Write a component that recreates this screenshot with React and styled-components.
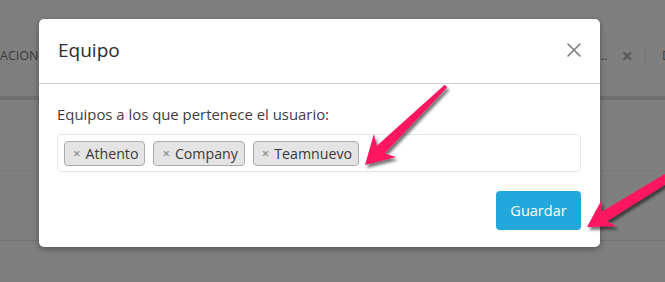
import React from "react";
import styled, { createGlobalStyle } from "styled-components";

const Global = createGlobalStyle`
  html, body { margin: 0; padding: 0; }
  body {
    width: 665px; height: 282px; overflow: hidden;
    font-family: "Open Sans", "Liberation Sans", sans-serif;
    background: #ffffff;
  }
`;

const Page = styled.div`
  position: relative;
  width: 665px;
  height: 282px;
  background: #ffffff;
  overflow: hidden;
`;

const TabBar = styled.div`
  display: flex;
  margin-top: 45px;
  height: 51px;
  border-bottom: 4px solid #dedede;
`;

const Tab = styled.div`
  display: flex;
  align-items: center;
  align-self: flex-start;
  height: 22px;
  justify-content: ${(p) => (p.$end ? "flex-end" : "flex-start")};
  gap: 14px;
  width: ${(p) => p.$w}px;
  flex: ${(p) => (p.$grow ? 1 : "none")};
  padding: ${(p) => p.$pad || "0"};
  border-right: ${(p) => (p.$divider ? "1px solid #ececec" : "none")};
  box-sizing: content-box;
  font-size: 12.5px;
  line-height: 16px;
  color: #777;
  white-space: nowrap;
`;

const TabClose = styled.span`
  font-size: 20px;
  font-weight: 700;
  color: #b4b4b4;
  line-height: 1;
`;

const Rule = styled.div`
  height: 1px;
  background: ${(p) => p.$color};
  margin-top: ${(p) => p.$mt}px;
`;

const Backdrop = styled.div`
  position: absolute;
  inset: 0;
  background: rgba(0, 0, 0, 0.5);
  display: flex;
  align-items: flex-start;
  padding: 19px 0 0 39px;
  box-sizing: border-box;
`;

const Modal = styled.div`
  width: 561px;
  background: #ffffff;
  border-radius: 5px;
  box-shadow: 0 2px 6px rgba(0, 0, 0, 0.35);
  display: flex;
  flex-direction: column;
`;

const Header = styled.div`
  height: 65px;
  display: flex;
  align-items: center;
  justify-content: space-between;
  padding: 0 18px 0 19px;
  border-bottom: 1px solid #c9cdd5;
  box-sizing: border-box;
`;

const Title = styled.h4`
  margin: 0;
  font-size: 19px;
  font-weight: 400;
  color: #2a2d31;
  line-height: 1;
  padding-bottom: 2px;
`;

const CloseBtn = styled.button`
  border: 0;
  background: transparent;
  padding: 0;
  width: 16px;
  height: 16px;
  display: flex;
  align-items: center;
  justify-content: center;
  cursor: pointer;
  margin-bottom: 3px;
`;

const Body = styled.div`
  padding: 20px 19px 0 18px;
  display: flex;
  flex-direction: column;
  gap: 10px;
`;

const Label = styled.div`
  font-size: 14.9px;
  line-height: 20px;
  color: #3e3e3e;
`;

const TagBox = styled.div`
  height: 38px;
  border: 1px solid #e6e6e6;
  border-radius: 4px;
  display: flex;
  align-items: center;
  gap: 8px;
  padding: 0 6px;
  box-sizing: border-box;
`;

const Tag = styled.span`
  display: inline-flex;
  align-items: center;
  height: 25px;
  padding: 0 6px 0 8px;
  gap: 5px;
  background: #e4e4e4;
  border: 1px solid #aaaaaa;
  border-radius: 4px;
  box-sizing: border-box;
  font-size: 14.2px;
  color: #3a3a3a;
`;

const TagRemove = styled.span`
  color: #999999;
  font-size: 13px;
  font-weight: 700;
  line-height: 1;
`;

const Footer = styled.div`
  display: flex;
  justify-content: flex-end;
  padding: 19px 19px 17px;
`;

const PrimaryButton = styled.button`
  width: 85px;
  height: 39px;
  border: 0;
  border-radius: 4px;
  background: #22a8da;
  color: #ffffff;
  font-family: inherit;
  font-size: 14.5px;
  cursor: pointer;
`;

const ArrowLayer = styled.svg`
  position: absolute;
  inset: 0;
  pointer-events: none;
`;

function arrowPoints(T, P, h, w, t0, t1, n) {
  const dx = P[0] - T[0];
  const dy = P[1] - T[1];
  const L = Math.hypot(dx, dy);
  const ux = dx / L, uy = dy / L;
  const vx = -uy, vy = ux;
  const pt = (a, b) =>
    `${(T[0] + ux * a + vx * b).toFixed(1)},${(T[1] + uy * a + vy * b).toFixed(1)}`;
  return [
    pt(0, -t0),
    pt(L - h + n, -t1),
    pt(L - h, -w),
    pt(L, 0),
    pt(L - h, w),
    pt(L - h + n, t1),
    pt(0, t0),
  ].join(" ");
}

const tags = ["Athento", "Company", "Teamnuevo"];

export default function App() {
  return (
    <>
      <Global />
      <Page>
        <TabBar>
          <Tab $w={40} $pad="0">ACION</Tab>
          <Tab $w={593} $end $divider $pad="0 12px 0 0">
            <span>Información del usu...</span>
            <TabClose>×</TabClose>
          </Tab>
          <Tab $grow $pad="0 0 0 16px">D</Tab>
        </TabBar>
        <Rule $color="#f4f4f4" $mt={70} />
        <Rule $color="#dcefd4" $mt={69} />

        <Backdrop>
          <Modal>
            <Header>
              <Title>Equipo</Title>
              <CloseBtn aria-label="Cerrar">
                <svg width="16" height="16" viewBox="0 0 16 16">
                  <path
                    d="M2 2 L14 14 M14 2 L2 14"
                    stroke="#7b7b7b"
                    strokeWidth="1.6"
                    strokeLinecap="round"
                  />
                </svg>
              </CloseBtn>
            </Header>
            <Body>
              <Label>Equipos a los que pertenece el usuario:</Label>
              <TagBox>
                {tags.map((t) => (
                  <Tag key={t}>
                    <TagRemove>×</TagRemove>
                    {t}
                  </Tag>
                ))}
              </TagBox>
            </Body>
            <Footer>
              <PrimaryButton>Guardar</PrimaryButton>
            </Footer>
          </Modal>
        </Backdrop>

        <ArrowLayer width="665" height="282" viewBox="0 0 665 282">
          <defs>
            <filter id="ashadow" x="-20%" y="-20%" width="140%" height="140%">
              <feDropShadow dx="2" dy="3" stdDeviation="1.6" floodColor="#000" floodOpacity="0.55" />
            </filter>
          </defs>
          <polygon
            points={arrowPoints([446, 86], [365, 165], 28, 16, 1.8, 5.5, 6)}
            fill="#ff1760"
            filter="url(#ashadow)"
          />
          <polygon
            points={arrowPoints([685, 167], [587, 227], 26, 15, 4.5, 5.5, 6)}
            fill="#ff1760"
            filter="url(#ashadow)"
          />
        </ArrowLayer>
      </Page>
    </>
  );
}
